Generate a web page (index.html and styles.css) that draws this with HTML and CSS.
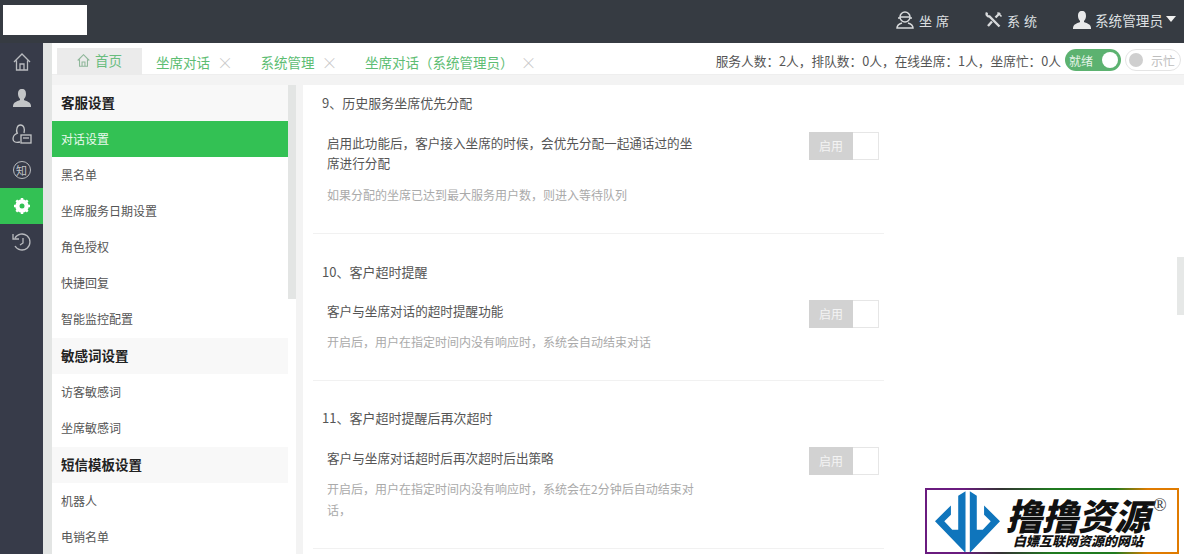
FILE: index.html
```html
<!DOCTYPE html>
<html lang="zh-CN">
<head>
  <meta charset="UTF-8" />
  <meta name="viewport" content="width=device-width, initial-scale=1.0" />
  <title>系统设置</title>
  <link rel="stylesheet" href="styles.css">
</head>
<body>
  <header class="topbar">
    <div class="logo"></div>
    <nav class="topnav">
      <a class="topnav-item spaced">
        <svg width="20" height="20" viewBox="0 0 20 20" fill="none" stroke="#d8dadc" stroke-width="1.5"><circle cx="10" cy="7" r="5"/><path d="M5 7h10M4 9v-2M16 9v-2M7 13c-3 1-5 2-5 5h16c0-3-2-4-5-5"/></svg>
        坐席
      </a>
      <a class="topnav-item spaced">
        <svg width="18" height="18" viewBox="0 0 18 18" fill="none" stroke="#d8dadc" stroke-width="2.400"><path d="M2 1.500c-1 2 0 4 2.500 4l10 10"/><path d="M15 2l-4.500 4.500M7 10.500l-4 4.500"/><path d="M12.500 1.500l4 4" stroke-width="1.600"/></svg>
        系统
      </a>
      <a class="topnav-item admin">
        <svg width="18" height="18" viewBox="0 0 18 18" fill="#e8e9ea"><path d="M9 0c3 0 4 2 4 5 0 2-1 4-2 5v1c2 1 7 2 7 6v1H0v-1c0-4 5-5 7-6v-1C6 9 5 7 5 5c0-3 1-5 4-5z"/></svg>
        系统管理员
        <span class="caret"></span>
      </a>
    </nav>
  </header>

  <div class="layout">
    <aside class="rail">
      <a class="rail-item">
        <svg width="18" height="18" viewBox="0 0 18 18" fill="none" stroke="#b9bbbf" stroke-width="1.3"><path d="M1 9l8-8 8 8M3.500 7.500V17h11V7.500M7 17v-6h4v6"/></svg>
      </a>
      <a class="rail-item">
        <svg width="18" height="18" viewBox="0 0 18 18" fill="#c3c5c7"><path d="M9 0c3 0 4 2 4 5 0 2-1 4-2 5v1c2 1 7 2 7 6v1H0v-1c0-4 5-5 7-6v-1C6 9 5 7 5 5c0-3 1-5 4-5z"/></svg>
      </a>
      <a class="rail-item">
        <svg width="20" height="20" viewBox="0 0 20 20" fill="none" stroke="#c3c5c7" stroke-width="1.3"><path d="M5 9C4 6 5 1 8.500 1S13 5 12 9M6 9c-3 1-5 3-5 6 0 3 3 4 7 3"/><rect x="9" y="11" width="10" height="8"/><path d="M11 14h6"/></svg>
      </a>
      <a class="rail-item">
        <span class="zhi">知</span>
      </a>
      <a class="rail-item active">
        <svg width="18" height="18" viewBox="0 0 18 18"><circle cx="9" cy="9" r="5" fill="none" stroke="#fff" stroke-width="3.500"/><path d="M9 1v16M1 9h16M3.300 3.300l11.400 11.400M14.700 3.300L3.300 14.700" stroke="#fff" stroke-width="2.500"/><circle cx="9" cy="9" r="2.500" fill="#33c154"/></svg>
      </a>
      <a class="rail-item">
        <svg width="20" height="20" viewBox="0 0 20 20" fill="none" stroke="#b9bbbf" stroke-width="1.3"><path d="M3 6a8 8 0 1 1 0 8M1 2v5h6M11 6v5l-3 2"/></svg>
      </a>
    </aside>

    <div class="workspace">
      <div class="tabbar">
        <div class="tabs">
          <a class="tab home">
            <svg width="13" height="13" viewBox="0 0 18 18" fill="none" stroke="#8fb79a" stroke-width="1.500"><path d="M1 9l8-8 8 8M3.500 7.500V17h11V7.500M7 17v-6h4v6"/></svg>
            首页
          </a>
          <a class="tab">坐席对话<span class="close">×</span></a>
          <a class="tab">系统管理<span class="close">×</span></a>
          <a class="tab">坐席对话（系统管理员）<span class="close">×</span></a>
        </div>
        <div class="status">
          <span>服务人数：2人，排队数：0人，在线坐席：1人，坐席忙：0人</span>
          <span class="pill on">就绪<i></i></span>
          <span class="pill off"><i></i>示忙</span>
        </div>
      </div>

      <div class="panels">
        <div class="sidebar">
          <div class="menu">
            <div class="menu-head">客服设置</div>
            <a class="menu-item current">对话设置</a>
            <a class="menu-item">黑名单</a>
            <a class="menu-item">坐席服务日期设置</a>
            <a class="menu-item">角色授权</a>
            <a class="menu-item">快捷回复</a>
            <a class="menu-item">智能监控配置</a>
            <div class="menu-head">敏感词设置</div>
            <a class="menu-item">访客敏感词</a>
            <a class="menu-item">坐席敏感词</a>
            <div class="menu-head">短信模板设置</div>
            <a class="menu-item">机器人</a>
            <a class="menu-item">电销名单</a>
          </div>
          <div class="menu-scroll"><div class="menu-thumb"></div></div>
        </div>

        <main class="content">
          <div class="settings">
            <section class="setting">
              <h3>9、历史服务坐席优先分配</h3>
              <div class="setting-row">
                <div class="setting-text">
                  <p class="desc">启用此功能后，客户接入坐席的时候，会优先分配一起通话过的坐席进行分配</p>
                  <p class="hint">如果分配的坐席已达到最大服务用户数，则进入等待队列</p>
                </div>
                <div class="switch"><span>启用</span><i></i></div>
              </div>
            </section>
            <section class="setting">
              <h3>10、客户超时提醒</h3>
              <div class="setting-row">
                <div class="setting-text">
                  <p class="desc">客户与坐席对话的超时提醒功能</p>
                  <p class="hint">开启后，用户在指定时间内没有响应时，系统会自动结束对话</p>
                </div>
                <div class="switch"><span>启用</span><i></i></div>
              </div>
            </section>
            <section class="setting">
              <h3>11、客户超时提醒后再次超时</h3>
              <div class="setting-row">
                <div class="setting-text">
                  <p class="desc">客户与坐席对话超时后再次超时后出策略</p>
                  <p class="hint">开启后，用户在指定时间内没有响应时，系统会在2分钟后自动结束对话，</p>
                </div>
                <div class="switch"><span>启用</span><i></i></div>
              </div>
            </section>
          </div>
          <div class="page-thumb"></div>
        </main>
      </div>
    </div>
  </div>

  <div class="watermark">
    <svg class="wm-logo" width="65" height="62" viewBox="30 14 196 186">
      <path fill="#0f75bc" d="M30 105L78 57V85L58 105L82 130H100V28L122 14V200Z"/>
      <path fill="#0f75bc" d="M226 105L178 57V85L198 105L174 130H156V28L135 14V200Z"/>
    </svg>
    <div class="wm-text">
      <div class="wm-title">撸撸资源</div>
      <div class="wm-sub">白嫖互联网资源的网站</div>
    </div>
    <span class="wm-reg">®</span>
  </div>
</body>
</html>
```

FILE: styles.css
```css
* {
  box-sizing: border-box;
}

html, body {
  height: 100%;
}

body {
  margin: 0;
  overflow: hidden;
  background: #fff;
  font-family: "Noto Sans CJK SC", "Noto Sans", sans-serif;
  font-size: 12px;
  color: #555;
}

.topbar {
  height: 43px;
  background: #363b42;
  display: flex;
  align-items: center;
  justify-content: space-between;
  padding: 0 8px 3px 3px;
}

.logo {
  width: 84px;
  height: 30px;
  background: #fff;
}

.topnav {
  display: flex;
  gap: 32px;
}

.topnav-item {
  display: flex;
  align-items: center;
  gap: 4px;
  color: #dfe0e2;
  font-size: 13px;
}

.spaced {
  letter-spacing: 4px;
}

.admin {
  font-size: 13.600px;
  gap: 4px;
}

.caret {
  width: 0;
  height: 0;
  border-left: 5px solid transparent;
  border-right: 5px solid transparent;
  border-top: 6px solid #f0f0f0;
  margin: -3px 0 0 -1px;
}

.layout {
  display: flex;
  height: 511px;
}

.rail {
  width: 43px;
  flex: none;
  background: #373b49;
  padding-top: 1px;
}

.rail-item {
  height: 36px;
  display: flex;
  align-items: center;
  justify-content: center;
}

.rail-item.active {
  background: #33c154;
}

.zhi {
  width: 18px;
  height: 18px;
  border: 1px solid #b9bbbf;
  border-radius: 50%;
  color: #c3c5c7;
  font-size: 11px;
  line-height: 16px;
  text-align: center;
}

.workspace {
  flex: 1;
  min-width: 0;
  background: #f3f3f3;
  border-left: 9px solid #e3e5e4;
}

.tabbar {
  height: 32px;
  background: #fff;
  display: flex;
  justify-content: space-between;
  border-bottom: 1px solid #eee;
  padding: 5px 3px 0 5px;
}

.tabs {
  display: flex;
}

.tab {
  display: flex;
  align-items: center;
  color: #5dbd73;
  font-size: 13.500px;
  height: 27px;
  padding-left: 14px;
  width: 104.500px;
}

.tab:last-child {
  width: auto;
}

.tab.home {
  width: 85px;
  justify-content: center;
  gap: 5px;
  padding: 0 0 3px;
  background: #ebebeb;
  color: #69bd7e;
}

.close {
  color: #c8c8c8;
  font-size: 16px;
  font-weight: 300;
  margin-left: 7px;
}

.status {
  display: flex;
  align-items: center;
  height: 22px;
  margin-top: 1px;
  color: #555;
  font-size: 12.700px;
}

.pill {
  display: flex;
  align-items: center;
  justify-content: space-between;
  width: 56px;
  height: 22px;
  border-radius: 11px;
  padding: 0 3px 0 4px;
  font-size: 12px;
  margin-left: 4px;
}

.pill i {
  width: 16px;
  height: 16px;
  border-radius: 50%;
}

.pill.on {
  background: #5cb270;
  color: #e6f4e9;
}

.pill.on i {
  background: #fff;
}

.pill.off {
  border: 1px solid #e4e4e4;
  color: #bdbdbd;
  padding: 0 5px 0 3px;
}

.pill.off i {
  width: 14px;
  height: 14px;
  background: #cfcfcf;
}

.panels {
  display: flex;
  height: 469px;
  margin-top: 10px;
}

.sidebar {
  width: 244px;
  flex: none;
  display: flex;
  background: #fff;
  overflow: hidden;
}

.menu {
  width: 236px;
  flex: none;
}

.menu-head {
  height: 36px;
  line-height: 34px;
  padding-left: 9px;
  background: #f8f8f8;
  color: #222;
  font-size: 13.500px;
  font-weight: 700;
}

.menu-item + .menu-head {
  margin-top: 1px;
}

.menu-item {
  display: block;
  height: 36px;
  line-height: 36px;
  padding-left: 9px;
  color: #555;
  font-size: 12px;
}

.menu-item.current {
  background: #33c154;
  color: #e9f9ed;
}

.menu-scroll {
  flex: 1;
}

.menu-thumb {
  height: 214px;
  background: #e3e5e4;
}

.content {
  flex: 1;
  min-width: 0;
  margin-left: 7px;
  background: #fff;
  overflow: hidden;
  position: relative;
}

.settings {
  width: 571px;
  margin: -20px 0 0 10px;
}

.setting {
  border-bottom: 1px solid #f1f1f1;
  padding: 28px 5px 28px 9px;
}

.setting:last-child {
  padding-top: 27px;
}

.setting h3 {
  margin: 0 0 19px;
  font-size: 13px;
  font-weight: 400;
  line-height: 20px;
  color: #555;
}

.setting:nth-child(2) h3 {
  margin-bottom: 18px;
}

.setting-row {
  display: flex;
  justify-content: space-between;
  align-items: flex-start;
}

.setting-text {
  width: 370px;
  margin-left: 5px;
  padding-top: 1px;
}

.setting p {
  margin: 0;
}

.desc {
  font-size: 12.600px;
  line-height: 20px;
  color: #555;
}

.setting .hint {
  font-size: 12px;
  line-height: 21px;
  color: #aaa;
  margin-top: 10px;
}

.setting:first-child .hint {
  margin-top: 11px;
}

.switch {
  display: flex;
  width: 70px;
  height: 28px;
  border-radius: 2px;
}

.switch span {
  width: 44px;
  background: #d2d2d2;
  color: #f4f4f4;
  text-align: center;
  line-height: 28px;
}

.switch i {
  flex: 1;
  background: #fff;
  border: 1px solid #e6e6e6;
  border-left: none;
}

.page-thumb {
  position: absolute;
  right: 0;
  top: 172px;
  width: 7px;
  height: 58px;
  background: #e6e8e7;
}

.watermark {
  position: absolute;
  left: 925px;
  top: 488px;
  width: 254px;
  height: 66px;
  background: #fff;
  border: 2px solid;
  border-image: linear-gradient(to right, #6a1b7f 0%, #6a1b7f 15%, #333 30%, #1f7a1f 50%, #1f7a1f 75%, #e07b00 88%, #e07b00 100%) 1;
  display: flex;
  overflow: hidden;
}

.wm-logo {
  margin: 1px 0 0 8px;
  flex: none;
}

.wm-text {
  margin-left: 6px;
  font-style: italic;
  font-weight: 900;
  color: #111;
  text-align: center;
}

.wm-title {
  font-size: 36px;
  line-height: 34px;
  margin-top: 7px;
  white-space: nowrap;
}

.wm-sub {
  font-size: 13px;
  line-height: 14px;
  margin-top: 3px;
  white-space: nowrap;
}

.wm-reg {
  font-family: "Liberation Serif", serif;
  font-size: 18px;
  line-height: 18px;
  color: #444;
  margin: 6px 0 0 3px;
}
```
